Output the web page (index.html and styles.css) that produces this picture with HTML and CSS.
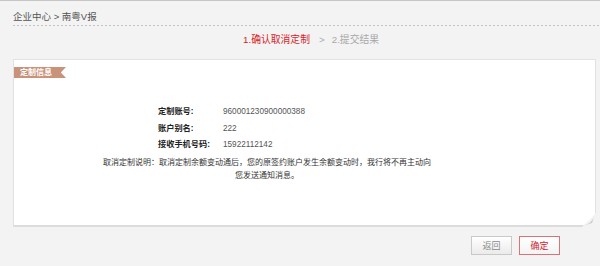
FILE: index.html
```html
<!DOCTYPE html>
<html lang="zh-CN">
<head>
<meta charset="utf-8">
<title>确认取消定制</title>
<link rel="stylesheet" href="styles.css">
</head>
<body>
<div class="page">
  <div class="crumb">企业中心 &gt; 南粤V报</div>
  <div class="dots"></div>
  <div class="steps"><span class="step-on">1.确认取消定制</span><span class="step-sep">&gt;</span><span class="step-off">2.提交结果</span></div>
  <div class="panel">
    <div class="ribbon">定制信息</div>
    <div class="rows">
      <div class="row"><span class="lbl">定制账号:</span><span class="val">960001230900000388</span></div>
      <div class="row"><span class="lbl">账户别名:</span><span class="val">222</span></div>
      <div class="row"><span class="lbl">接收手机号码:</span><span class="val">15922112142</span></div>
    </div>
    <p class="desc">取消定制说明：取消定制余额变动通后，您的原签约账户发生余额变动时，我行将不再主动向您发送通知消息。</p>
    <svg class="curl" width="14" height="14" viewBox="0 0 14 14">
      <defs>
        <linearGradient id="g" x1="0" y1="0" x2="1" y2="1">
          <stop offset="0" stop-color="#f6f6f6"/>
          <stop offset="1" stop-color="#b9b9b9"/>
        </linearGradient>
      </defs>
      <polygon points="14,0 14,14 0,14" fill="#f3f3f3"/>
      <path d="M13,1 Q11,10 1,13 L10,10 Z" fill="url(#g)"/>
    </svg>
  </div>
  <div class="actions">
    <button class="btn btn-back">返回</button>
    <button class="btn btn-ok">确定</button>
  </div>
</div>
</body>
</html>
```
FILE: styles.css
```css
html, body {
  margin: 0;
  padding: 0;
}
body {
  background: #f3f3f3;
  border-top: 1px solid #c6c6c6;
  font-family: "Liberation Sans", "Noto Sans CJK SC", sans-serif;
  width: 600px;
  height: 265px;
  overflow: hidden;
}
.page {
  padding-left: 13px;
}
.crumb {
  height: 23px;
  line-height: 10px;
  padding-top: 11px;
  box-sizing: border-box;
  font-size: 9.5px;
  color: #555;
}
.dots {
  height: 1px;
  margin-top: 1px;
  background-image: repeating-linear-gradient(to right, #c4c4c4 0, #c4c4c4 2px, transparent 2px, transparent 4px);
}
.steps {
  padding-left: 230px;
  margin-top: 9px;
  height: 10px;
  line-height: 10px;
  font-size: 9.8px;
  display: flex;
  align-items: center;
}
.step-on {
  color: #d8232a;
}
.step-sep {
  color: #aaa;
  margin: 0 7px 0 9px;
}
.step-off {
  color: #a8a8a8;
}
.panel {
  position: relative;
  margin-top: 14px;
  width: 581px;
  height: 165px;
  background: #fff;
  border: 1px solid #e2e2e2;
  border-bottom: 2px solid #dcdcdc;
}
.ribbon {
  margin-top: 7px;
  width: 52px;
  height: 11px;
  line-height: 11px;
  box-sizing: border-box;
  padding-left: 6px;
  background: #c9927a;
  color: #fff;
  font-size: 8px;
  font-weight: bold;
  clip-path: polygon(0 0, 100% 0, 90% 50%, 100% 100%, 0 100%);
}
.rows {
  margin-top: 26px;
  margin-left: 144px;
  font-size: 8.2px;
}
.row {
  display: flex;
  height: 16.6px;
  line-height: 16.6px;
}
.lbl {
  width: 65px;
  font-weight: bold;
  color: #222;
}
.val {
  color: #555;
}
.desc {
  margin: 2px 0 0 87px;
  width: 332px;
  font-size: 8px;
  line-height: 13px;
  color: #333;
  text-align: center;
}
.curl {
  position: absolute;
  right: -1px;
  bottom: -2px;
}
.actions {
  display: flex;
  justify-content: flex-end;
  gap: 7px;
  margin-top: 9px;
  padding-right: 40px;
}
.btn {
  width: 41px;
  height: 19px;
  padding: 0;
  font-family: "Liberation Sans", "Noto Sans CJK SC", sans-serif;
  font-size: 9px;
  cursor: pointer;
}
.btn-back {
  border: 1px solid #c9c9c9;
  background: linear-gradient(#ffffff, #ebebeb);
  color: #8a8a8a;
}
.btn-ok {
  border: 1px solid #d8737a;
  background: linear-gradient(#ffffff, #f3f3f3);
  color: #cc2630;
}
```
